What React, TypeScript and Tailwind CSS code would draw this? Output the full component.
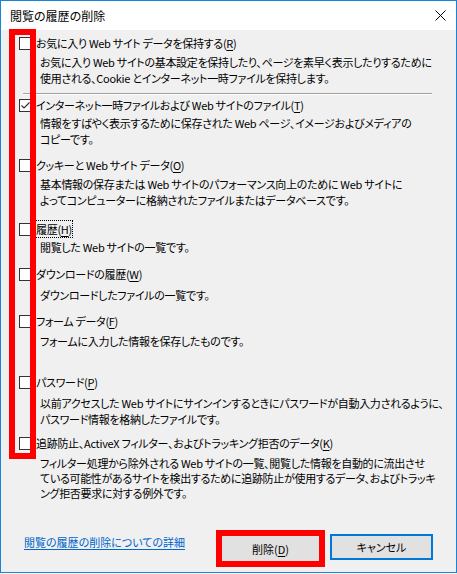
import React from "react";

const font = "font-['Noto_Sans_CJK_JP','Noto_Sans',sans-serif] [font-feature-settings:'palt']";

function Mn({ pre, k }: { pre: string; k: string }) {
  return (
    <>
      {pre}(<span className="underline underline-offset-[2px]">{k}</span>)
    </>
  );
}

function Box({ checked }: { checked?: boolean }) {
  return (
    <div className="w-[13px] h-[13px] shrink-0 border border-[#333333] bg-white flex items-center justify-center">
      {checked && (
        <svg width="11" height="11" viewBox="0 0 11 11">
          <polyline points="1.5,5.5 4,8 9.5,2.5" fill="none" stroke="#333333" strokeWidth="1.2" />
        </svg>
      )}
    </div>
  );
}

function Item({
  label,
  lines,
  mt,
  dmt,
  checked,
  focus,
  lh = "leading-[16px]",
}: {
  label: React.ReactNode;
  lines: string[];
  mt: string;
  dmt: string;
  checked?: boolean;
  focus?: boolean;
  lh?: string;
}) {
  return (
    <div className={mt}>
      <div className="flex items-center gap-[4px] h-[16px]">
        <Box checked={checked} />
        <span
          className={
            "whitespace-nowrap leading-[16px] " +
            (focus ? "inline-block outline outline-1 outline-dotted outline-black" : "")
          }
        >
          {label}
        </span>
      </div>
      <div className={"pl-[21px] whitespace-nowrap " + lh + " " + dmt}>
        {lines.map((l, i) => (
          <div key={i}>{l}</div>
        ))}
      </div>
    </div>
  );
}

export default function App() {
  return (
    <div className={"w-[457px] h-[574px] bg-white text-[11px] text-black " + font}>
      <div className="relative w-[457px] h-[573px] border border-[#1883d7] bg-[#f0f0f0] flex flex-col">
        <div className="h-[29px] bg-white flex items-center justify-between pl-[9px] pr-[10px] shrink-0">
          <span className="leading-[16px] text-[12px]">閲覧の履歴の削除</span>
          <svg width="11" height="11" viewBox="0 0 11 11">
            <path d="M0.5 0.5 L10.5 10.5 M10.5 0.5 L0.5 10.5" stroke="#000" strokeWidth="1" fill="none" />
          </svg>
        </div>

        <div className="flex flex-col">
          <div className="pl-[18px] tracking-[-0.3px]">
            <Item
              mt="mt-[5px]"
              dmt="mt-[3px]"
              label={<Mn pre="お気に入り Web サイト データを保持する" k="R" />}
              lines={[
                "お気に入り Web サイトの基本設定を保持したり、ページを素早く表示したりするために",
                "使用される、Cookie とインターネット一時ファイルを保持します。",
              ]}
            />
          </div>
          <div className="mt-[7px] ml-[22px] w-[409px] h-[2px] border-t border-[#a0a0a0] border-b border-b-white" />
          <div className="pl-[18px] tracking-[-0.3px]">
            <Item
              mt="mt-[2px]"
              dmt="mt-[2px]"
              checked
              label={<Mn pre="インターネット一時ファイルおよび Web サイトのファイル" k="T" />}
              lines={[
                "情報をすばやく表示するために保存された Web ページ、イメージおよびメディアの",
                "コピーです。",
              ]}
            />
            <Item
              mt="mt-[10px]"
              dmt="mt-[3px]"
              label={<Mn pre="クッキーと Web サイト データ" k="O" />}
              lines={[
                "基本情報の保存または Web サイトのパフォーマンス向上のために Web サイトに",
                "よってコンピューターに格納されたファイルまたはデータベースです。",
              ]}
            />
            <Item
              mt="mt-[13px]"
              dmt="mt-[2px]"
              focus
              label={<Mn pre="履歴" k="H" />}
              lines={["閲覧した Web サイトの一覧です。"]}
            />
            <Item
              mt="mt-[11px]"
              dmt="mt-[5px]"
              label={<Mn pre="ダウンロードの履歴" k="W" />}
              lines={["ダウンロードしたファイルの一覧です。"]}
            />
            <Item
              mt="mt-[10px]"
              dmt="mt-[4px]"
              label={<Mn pre="フォーム データ" k="F" />}
              lines={["フォームに入力した情報を保存したものです。"]}
            />
            <Item
              mt="mt-[25px]"
              dmt="mt-[5px]"
              label={<Mn pre="パスワード" k="P" />}
              lines={[
                "以前アクセスした Web サイトにサインインするときにパスワードが自動入力されるように、",
                "パスワード情報を格納したファイルです。",
              ]}
            />
            <Item
              mt="mt-[8px]"
              dmt="mt-[5px]"
              lh="leading-[15px]"
              label={<Mn pre="追跡防止、ActiveX フィルター、およびトラッキング拒否のデータ" k="K" />}
              lines={[
                "フィルター処理から除外される Web サイトの一覧、閲覧した情報を自動的に流出させ",
                "ている可能性があるサイトを検出するために追跡防止が使用するデータ、およびトラッキ",
                "ング拒否要求に対する例外です。",
              ]}
            />
          </div>

          <div className="mt-[29px] flex items-start pl-[23px] pr-[23px]">
            <span className="mt-[4px] leading-[16px] text-[#0066cc] underline underline-offset-[2px] whitespace-nowrap">
              閲覧の履歴の削除についての詳細
            </span>
            <div className="ml-auto flex items-start gap-[5px]">
              <div className="w-[109px] h-[37px] border-[6px] border-[#ff0000] bg-[#e1e1e1] flex items-center justify-center">
                <span className="leading-[16px]">
                  <Mn pre="削除" k="D" />
                </span>
              </div>
              <div className="mt-[4px] w-[103px] h-[26px] border-2 border-[#0078d7] bg-[#e1e1e1] flex items-center justify-center">
                <span className="leading-[16px]">キャンセル</span>
              </div>
            </div>
          </div>
        </div>

        <div className="absolute left-[8px] top-[28px] w-[27px] h-[430px] border-[6px] border-[#ff0000]" />
      </div>
    </div>
  );
}
